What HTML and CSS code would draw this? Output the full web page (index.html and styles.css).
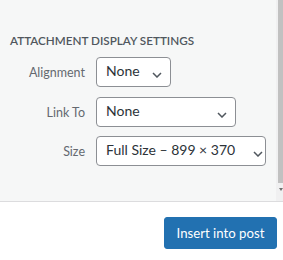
FILE: index.html
```html
<!DOCTYPE html>
<html lang="en">
<head>
  <meta charset="UTF-8">
  <meta name="viewport" content="width=device-width, initial-scale=1.0">
  <title>Attachment Display Settings</title>
  <link rel="stylesheet" href="styles.css">
</head>
<body>
  <div class="sidebar">
    <div class="settings">
      <h2>Attachment Display Settings</h2>

      <div class="setting">
        <span class="name">Alignment</span>
        <div class="select select-align">
          <span>None</span>
          <svg class="chevron" viewBox="0 0 10 6"><path d="M1 1l4 4 4-4"/></svg>
        </div>
      </div>

      <div class="setting">
        <span class="name">Link To</span>
        <div class="select select-link">
          <span>None</span>
          <svg class="chevron" viewBox="0 0 10 6"><path d="M1 1l4 4 4-4"/></svg>
        </div>
      </div>

      <div class="setting">
        <span class="name">Size</span>
        <div class="select select-size">
          <span>Full Size &ndash; 899 &times; 370</span>
          <svg class="chevron" viewBox="0 0 10 6"><path d="M1 1l4 4 4-4"/></svg>
        </div>
      </div>
    </div>

    <!-- fake scrollbar, cut off at the window edge -->
    <div class="scrollbar">
      <div class="thumb"></div>
      <div class="arrow"></div>
    </div>
  </div>

  <div class="toolbar">
    <button class="button-primary">Insert into post</button>
  </div>
</body>
</html>
```

FILE: styles.css
```css
body {
  margin: 0;
  font-family: Lato, 'Open Sans', sans-serif;
  background-color: #fff;
  color: #2c3338;
}

.sidebar {
  display: flex;
  height: 201px;
  background-color: #f6f7f7;
  border-bottom: 1px solid #dcdcde;
}

.settings {
  flex: 1;
  padding: 32px 0 0 10px;
}

.settings h2 {
  margin: 0 0 9px;
  font-size: 11.7px;
  line-height: 16px;
  font-weight: 600;
  text-transform: uppercase;
  color: #50575e;
}

.setting {
  display: flex;
  align-items: flex-start;
  margin-bottom: 9.5px;
}

.setting .name {
  width: 75px;
  margin-right: 11px;
  padding-top: 8px;
  text-align: right;
  font-size: 12.5px;
  line-height: 16px;
  color: #646970;
}

.select {
  display: flex;
  align-items: flex-start;
  box-sizing: border-box;
  height: 30px;
  padding: 0 8px 2px 9px;
  border: 1px solid #8c8f94;
  border-radius: 4px;
  background-color: #fff;
  font-size: 14px;
  line-height: 26px;
  color: #2c3338;
  white-space: nowrap;
}

.select-align {
  width: 75px;
}

.select-link {
  width: 140px;
}

.select-size {
  width: 170px;
  padding-right: 2px;
}

.chevron {
  width: 10px;
  height: 6px;
  margin: 14px 0 0 auto;
  fill: none;
  stroke: #50575e;
  stroke-width: 1.5;
}

.scrollbar {
  width: 7px;
  background-color: #f0f0f1;
}

.thumb {
  height: 183px;
  margin-left: 2px;
  background-color: #c1c1c1;
}

.arrow {
  width: 0;
  height: 0;
  margin: 5px 0 0 3px;
  border-left: 2px solid transparent;
  border-right: 2px solid transparent;
  border-top: 3px solid #707070;
}

.toolbar {
  display: flex;
  justify-content: flex-end;
  padding: 15px 6px 0 0;
}

.button-primary {
  height: 32px;
  width: 113px;
  padding: 0;
  border: 1px solid #2271b1;
  border-radius: 3px;
  background-color: #2271b1;
  color: #fff;
  font-family: Lato, 'Open Sans', sans-serif;
  font-size: 13.2px;
  line-height: 30px;
  cursor: pointer;
}
```
